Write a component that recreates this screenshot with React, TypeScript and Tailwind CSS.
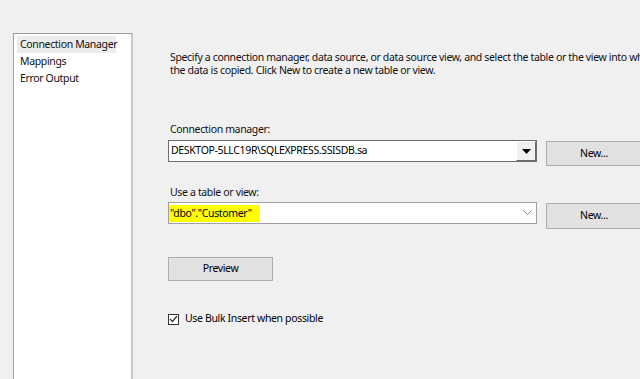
const ComboArrow = () => (
  <svg width="9" height="5" viewBox="0 0 9 5">
    <path d="M0 0h9L4.5 5z" fill="#000" />
  </svg>
);

const ChevronDown = () => (
  <svg width="9" height="6" viewBox="0 0 9 6" fill="none">
    <path d="M0.5 0.5L4.5 4.5L8.5 0.5" stroke="#8a8a8a" strokeWidth="1" />
  </svg>
);

const NavItem = ({ label, selected = false }: { label: string; selected?: boolean }) => (
  <div className={`h-[17px] leading-[17px] pl-[3px] w-[99px] whitespace-nowrap ${selected ? "bg-[#ececec]" : ""}`}>
    {label}
  </div>
);

const WinButton = ({ children, className = "" }: { children: React.ReactNode; className?: string }) => (
  <button
    type="button"
    className={`bg-[#e1e1e1] border border-[#adadad] text-black flex items-center justify-center ${className}`}
  >
    {children}
  </button>
);

export default function App() {
  return (
    <div
      className="w-[640px] h-[379px] overflow-hidden bg-[#f0f0f0] flex text-[10.5px] tracking-[-0.35px] text-[#111]"
      style={{ fontFamily: '"Noto Sans", "Liberation Sans", sans-serif' }}
    >
      {/* Left nav list */}
      <div className="pl-[13px] pt-[33px] shrink-0">
        <div className="w-[120px] h-[360px] bg-white border border-[#a0a0a0] border-r-2 border-r-[#c8c8c8] pt-[2px] pl-[3px]">
          <NavItem label="Connection Manager" selected />
          <NavItem label="Mappings" />
          <NavItem label="Error Output" />
        </div>
      </div>

      {/* Right content */}
      <div className="pl-[35px] pt-[51px] flex-1 min-w-0">
        <p className="leading-[13px] pl-[2px] whitespace-nowrap">
          Specify a connection manager, data source, or data source view, and select the table or the view into which
          <br />
          the data is copied. Click New to create a new table or view.
        </p>

        <div className="mt-[44px] leading-[16px] pl-[2px]">Connection manager:</div>
        <div className="mt-[3px] flex items-start">
          <div className="w-[369px] h-[22px] bg-white border border-[#6e6e6e] flex items-center shrink-0">
            <span className="flex-1 pl-[2px] text-black">DESKTOP-5LLC19R\SQLEXPRESS.SSISDB.sa</span>
            <div className="w-[20px] h-[20px] bg-[#f0f0f0] border border-t-white border-l-white border-r-[#696969] border-b-[#696969] flex items-center justify-center">
              <ComboArrow />
            </div>
          </div>
          <WinButton className="ml-[9px] mt-[1px] w-[96px] h-[25px] shrink-0">New...</WinButton>
        </div>

        <div className="mt-[18px] leading-[16px] pl-[2px]">Use a table or view:</div>
        <div className="mt-[2px] flex items-start">
          <div className="w-[369px] h-[22px] bg-white border border-[#a0a0a0] flex items-center shrink-0">
            <div className="flex-1">
              <span className="bg-[#ffff00] text-black pl-[1px] pr-[8px] py-[1px] leading-[15px] inline-block">
                "dbo"."Customer"
              </span>
            </div>
            <div className="w-[18px] flex items-center justify-center">
              <ChevronDown />
            </div>
          </div>
          <WinButton className="ml-[9px] mt-[1px] w-[96px] h-[26px] shrink-0">New...</WinButton>
        </div>

        <WinButton className="mt-[28px] w-[105px] h-[24px] border-[#0078d7]">Preview</WinButton>

        <label className="mt-[30px] h-[16px] flex items-center gap-[6px]">
          <span className="w-[11px] h-[11px] border border-[#333] bg-white flex items-center justify-center">
            <svg width="9" height="8" viewBox="0 0 9 8" fill="none">
              <path d="M1 4L3.5 6.5L8 1" stroke="#333" strokeWidth="1.2" />
            </svg>
          </span>
          <span className="text-black">Use Bulk Insert when possible</span>
        </label>
      </div>
    </div>
  );
}
